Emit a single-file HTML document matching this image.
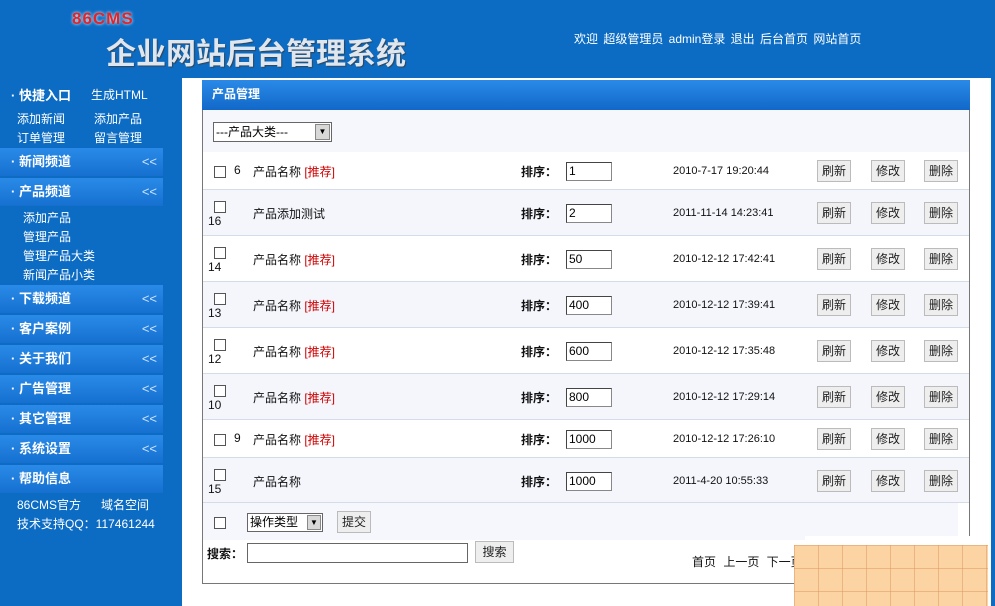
<!DOCTYPE html>
<html><head><meta charset="utf-8"><style>
*{margin:0;padding:0;box-sizing:border-box}
body{width:995px;height:606px;overflow:hidden;background:#0c6cc4;font-family:"Liberation Sans","Noto Sans CJK SC",sans-serif;font-size:12px;position:relative}
.a{position:absolute}
.w{color:#fff}
.bar{position:absolute;left:0;width:163px;height:28px;background:linear-gradient(#2a8ae8,#1570d0);color:#fff;font-weight:bold;font-size:13px;line-height:28px;padding-left:11px}
.bar i{position:absolute;right:6px;font-style:normal;font-weight:normal;color:#cfe4ff}
.main{left:182px;top:78px;width:809px;height:528px;background:#fff}
.panel{left:202px;top:80px;width:768px;height:504px;border:1px solid #777;border-top:none;background:#fff}
.cb{position:absolute;width:12px;height:12px;border:1px solid #555;background:#fff}
.btn{position:absolute;width:34px;height:22px;border:1px solid #bbb;background:#eee;font-size:12px;text-align:center;line-height:20px;color:#222}
.inp{position:absolute;width:46px;height:19px;border:1px solid #888;border-top-color:#444;border-left-color:#444;background:#fff;font-size:12px;line-height:17px;padding-left:2px}
.t{position:absolute;font-size:12px;color:#111}
.red{color:#c00}
</style></head><body>
<div class="a" style="left:72px;top:9px;color:#e0262a;font-weight:bold;font-size:17px;letter-spacing:1px;text-shadow:0 0 3px #fff">86CMS</div>
<div class="a" style="left:106px;top:29px;color:#dfe6ee;font-weight:bold;font-size:30px;letter-spacing:0px;text-shadow:1px 1px 1px #345">企业网站后台管理系统</div>
<div class="a w" style="left:574px;top:30px;font-size:12px;word-spacing:2px">欢迎 超级管理员 admin登录 退出 后台首页 网站首页</div>

<div class="a w" style="left:11px;top:85px;font-weight:bold;font-size:13px">· 快捷入口</div>
<div class="a w" style="left:91px;top:86px">生成HTML</div>
<div class="a w" style="left:17px;top:110px">添加新闻</div>
<div class="a w" style="left:94px;top:110px">添加产品</div>
<div class="a w" style="left:17px;top:129px">订单管理</div>
<div class="a w" style="left:94px;top:129px">留言管理</div>
<div class="bar" style="top:148px">· 新闻频道<i>&lt;&lt;</i></div>
<div class="bar" style="top:178px">· 产品频道<i>&lt;&lt;</i></div>
<div class="a w" style="left:23px;top:209px">添加产品</div>
<div class="a w" style="left:23px;top:228px">管理产品</div>
<div class="a w" style="left:23px;top:247px">管理产品大类</div>
<div class="a w" style="left:23px;top:266px">新闻产品小类</div>
<div class="bar" style="top:285px">· 下载频道<i>&lt;&lt;</i></div>
<div class="bar" style="top:315px">· 客户案例<i>&lt;&lt;</i></div>
<div class="bar" style="top:345px">· 关于我们<i>&lt;&lt;</i></div>
<div class="bar" style="top:375px">· 广告管理<i>&lt;&lt;</i></div>
<div class="bar" style="top:405px">· 其它管理<i>&lt;&lt;</i></div>
<div class="bar" style="top:435px">· 系统设置<i>&lt;&lt;</i></div>
<div class="bar" style="top:465px">· 帮助信息</div>
<div class="a w" style="left:17px;top:496px">86CMS官方 &nbsp;&nbsp;&nbsp;&nbsp;&nbsp;域名空间</div>
<div class="a w" style="left:17px;top:515px">技术支持QQ：117461244</div>

<div class="a main"></div>
<div class="a panel">
 <div class="a" style="left:-1px;top:0;width:768px;height:30px;background:linear-gradient(#2a8ae8,#1168c8);color:#fff;font-weight:bold;line-height:28px;padding-left:10px;font-size:12px">产品管理</div>
 <div class="a" style="left:0;top:30px;width:766px;height:42px;background:#f5f7fd"></div>
 <div class="a" style="left:10px;top:42px;width:119px;height:20px;border:1px solid #666;background:#fff;font-size:12px;line-height:18px;padding-left:2px">---产品大类---<span class="a" style="right:1px;top:1px;width:15px;height:16px;background:#d8d8d8;border:1px solid #888;font-size:8px;text-align:center;line-height:14px">▼</span></div>
</div>
<div id="rows"></div>
<div class="a" style="left:203px;top:503px;width:755px;height:37px;background:#f5f7fd"></div>
<div class="cb" style="left:214px;top:517px"></div>
<div class="a" style="left:247px;top:513px;width:76px;height:19px;border:1px solid #666;background:#fff;line-height:17px;padding-left:2px">操作类型<span class="a" style="right:1px;top:1px;width:14px;height:15px;background:#d8d8d8;border:1px solid #888;font-size:8px;text-align:center;line-height:13px">▼</span></div>
<div class="btn" style="left:337px;top:511px">提交</div>
<div class="t" style="left:207px;top:545px;font-weight:bold">搜索：</div>
<div class="a" style="left:247px;top:543px;width:221px;height:20px;border:1px solid #666;background:#fff"></div>
<div class="btn" style="left:475px;top:541px;width:39px">搜索</div>
<div class="t" style="left:692px;top:553px;word-spacing:4px">首页 上一页 下一页</div>
<div class="a" style="left:805px;top:536px;width:183px;height:12px;background:#fff"></div>
<div class="a" style="left:794px;top:545px;width:194px;height:61px;background-color:#fcd3a3;background-image:linear-gradient(90deg,rgba(220,150,90,.5) 1px,transparent 1px),linear-gradient(rgba(220,150,90,.5) 1px,transparent 1px);background-size:24px 100%,100% 23px"></div>
<div class="a" style="left:991px;top:78px;width:4px;height:528px;background:#0c6cc4"></div>
<script>
var d=[["6","产品名称",1,"1","2010-7-17 19:20:44",152,38,1],["16","产品添加测试",0,"2","2011-11-14 14:23:41",190,46,0],["14","产品名称",1,"50","2010-12-12 17:42:41",236,46,0],["13","产品名称",1,"400","2010-12-12 17:39:41",282,46,0],["12","产品名称",1,"600","2010-12-12 17:35:48",328,46,0],["10","产品名称",1,"800","2010-12-12 17:29:14",374,46,0],["9","产品名称",1,"1000","2010-12-12 17:26:10",420,38,1],["15","产品名称",0,"1000","2011-4-20 10:55:33",458,45,0]];
var h="";d.forEach(function(r,i){var y=r[5],H=r[6],c=y+H/2;
h+='<div class="a" style="left:203px;top:'+y+'px;width:766px;height:'+H+'px;background:'+(i%2?'#f4f6fc':'#fff')+';border-bottom:1px solid #d3dce8"></div>';
if(r[7]){h+='<div class="cb" style="left:214px;top:'+(c-5)+'px"></div><div class="t" style="left:234px;top:'+(c-8)+'px">'+r[0]+'</div>';}
else{h+='<div class="cb" style="left:214px;top:'+(c-12)+'px"></div><div class="t" style="left:208px;top:'+(c+1)+'px">'+r[0]+'</div>';}
h+='<div class="t" style="left:253px;top:'+(c-8)+'px">'+r[1]+(r[2]?' <span class="red">[推荐]</span>':'')+'</div>';
h+='<div class="t" style="left:521px;top:'+(c-8)+'px;font-weight:bold">排序：</div><div class="inp" style="left:566px;top:'+(c-9)+'px">'+r[3]+'</div>';
h+='<div class="t" style="left:673px;top:'+(c-6)+'px;font-size:11px">'+r[4]+'</div>';
h+='<div class="btn" style="left:817px;top:'+(c-11)+'px">刷新</div><div class="btn" style="left:871px;top:'+(c-11)+'px">修改</div><div class="btn" style="left:924px;top:'+(c-11)+'px">删除</div>';});
document.getElementById("rows").innerHTML=h;
</script>
</body></html>
